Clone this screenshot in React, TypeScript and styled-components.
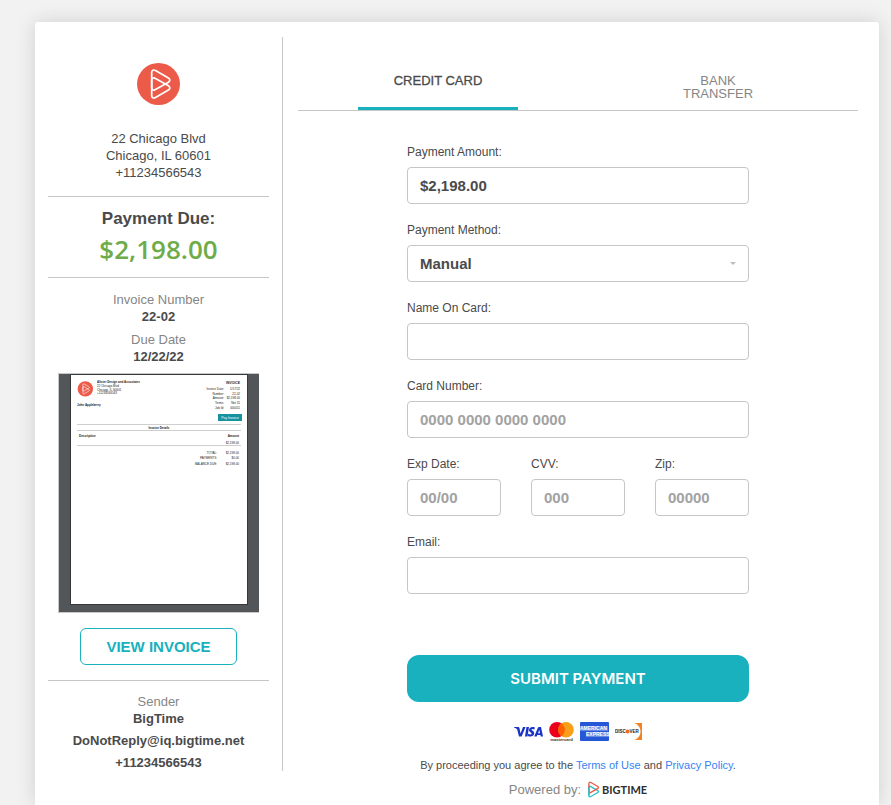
import React, { useState } from "react";
import styled, { createGlobalStyle } from "styled-components";

const teal = "#18b1bd";
const ink = "#4a4a4a";
const muted = "#868686";
const line = "#c6c6c6";
const coral = "#ec5b49";

const GlobalStyle = createGlobalStyle`
  *, *::before, *::after { box-sizing: border-box; }
  body {
    margin: 0;
    background: #f2f2f2;
    color: ${ink};
    font-family: "Liberation Sans", Arial, sans-serif;
    font-size: 13px;
    line-height: 17px;
  }
  button, input, select { font-family: inherit; }
`;

const Page = styled.div`
  display: flex;
  min-height: 100vh;
  padding: 22px 12px 0 35px;
`;

const Card = styled.div`
  flex: 1;
  display: flex;
  align-items: flex-start;
  padding-top: 15px;
  background: #fff;
  border-radius: 3px 3px 0 0;
  box-shadow: 0 0 20px rgba(0, 0, 0, 0.14);
`;

const Sidebar = styled.aside`
  flex: 0 0 248px;
  padding: 26px 13px 0;
  border-right: 1px solid ${line};
  text-align: center;
`;

const Section = styled.section<{ $top: number; $bottom: number }>`
  display: flex;
  flex-direction: column;
  align-items: center;
  padding: ${(p) => p.$top}px 0 ${(p) => p.$bottom}px;
  & + & { border-top: 1px solid ${line}; }
`;

const Address = styled.address`
  margin-top: 25px;
  font-style: normal;
`;

const DueTitle = styled.h2`
  margin: 0;
  font-size: 17px;
  line-height: 20px;
`;

const DueAmount = styled.div`
  margin-top: 3px;
  color: #6fac49;
  font-family: "Open Sans", "Noto Sans", sans-serif;
  font-size: 26px;
  font-weight: 600;
  line-height: 34px;
`;

const Facts = styled.dl<{ $gap: number }>`
  display: flex;
  flex-direction: column;
  gap: ${(p) => p.$gap}px;
  margin: 0;
`;

const Term = styled.dt`
  color: ${muted};
`;

const Value = styled.dd`
  margin: 0;
  font-weight: 700;
`;

const Thumbnail = styled.svg`
  display: block;
  margin-top: 8px;
  font-family: "Liberation Sans", Arial, sans-serif;
`;

const ViewButton = styled.button`
  width: 157px;
  height: 37px;
  margin-top: 14px;
  border: 1px solid ${teal};
  border-radius: 6px;
  background: #fff;
  color: ${teal};
  font-size: 15px;
  font-weight: 700;
  cursor: pointer;
`;

const Main = styled.main`
  flex: 1;
  min-width: 0;
  padding: 15px 21px 0 15px;
`;

const Tabs = styled.div`
  display: grid;
  grid-template-columns: 1fr 1fr;
  justify-items: center;
  border-bottom: 1px solid ${line};
`;

const Tab = styled.button<{ $active: boolean }>`
  display: flex;
  justify-content: center;
  align-items: flex-start;
  width: 160px;
  height: 58px;
  padding: 22px 32px 0;
  border: 0;
  background: ${(p) =>
    p.$active ? `linear-gradient(${teal}, ${teal}) bottom / 100% 3px no-repeat` : "none"};
  border-radius: 2px 2px 0 0;
  color: ${(p) => (p.$active ? ink : muted)};
  font-size: 13px;
  line-height: 13px;
  -webkit-text-stroke: ${(p) => (p.$active ? "0.3px" : "0")};
  cursor: pointer;
`;

const Form = styled.form`
  display: flex;
  flex-direction: column;
  gap: 19px;
  max-width: 342px;
  margin: 34px auto 0;
`;

const FieldBox = styled.div`
  display: flex;
  flex-direction: column;
  gap: 8px;
  min-width: 0;
`;

const Label = styled.label`
  font-size: 12px;
  line-height: 14px;
`;

const Input = styled.input`
  width: 100%;
  height: 37px;
  padding: 0 12px;
  border: 1px solid ${line};
  border-radius: 4px;
  background: #fff;
  color: ${ink};
  font-size: 15px;
  font-weight: 700;
  &::placeholder { color: #a2a2a2; opacity: 1; }
`;

const SelectWrap = styled.div`
  display: grid;
  align-items: center;
  & > * { grid-area: 1 / 1; }
  & > svg {
    justify-self: end;
    margin-right: 13px;
    pointer-events: none;
  }
`;

const Select = styled(Input).attrs({ as: "select" })`
  appearance: none;
`;

const Columns = styled.div`
  display: grid;
  grid-template-columns: repeat(3, 1fr);
  gap: 30px;
`;

const Submit = styled.button`
  height: 47px;
  margin-top: 42px;
  border: 0;
  border-radius: 12px;
  background: ${teal};
  color: #fff;
  font-family: Inter, sans-serif;
  font-size: 15px;
  font-weight: 600;
  cursor: pointer;
`;

const Footer = styled.footer`
  display: flex;
  flex-direction: column;
  align-items: center;
  padding-top: 20px;
`;

const Brands = styled.div`
  display: flex;
  gap: 6px;
`;

const Terms = styled.p`
  margin: 16px 0 0;
  font-size: 11px;
  line-height: 14px;
`;

const TermsLink = styled.a`
  color: #3583f5;
  text-decoration: none;
`;

const Powered = styled.div`
  display: flex;
  align-items: center;
  gap: 7px;
  margin-top: 9px;
  color: ${muted};
`;

const Wordmark = styled.span`
  display: flex;
  align-items: center;
  gap: 3px;
  color: #2d2d2d;
  font-family: Lato, sans-serif;
  font-size: 11px;
  font-weight: 700;
`;

const upper =
  "M14.7 9.5C14.7 7 16.5 6.4 18.5 7.6L31 14.8C33.5 16.2 33.5 18 31 19.5L18.5 26.6C16.5 27.8 14.7 27 14.7 24.5Z";
const lower =
  "M14.7 32.5C14.7 35 16.5 35.6 18.5 34.4L31 27.2C33.5 25.8 33.5 24 31 22.5L18.5 15.4C16.5 14.2 14.7 15 14.7 17.5Z";

const Emblem = () => (
  <>
    <ellipse cx="21.5" cy="21" rx="21.5" ry="21" fill={coral} />
    <path d={upper} fill="none" stroke="#fff" strokeWidth="1.7" />
    <path d={lower} fill="none" stroke="#fff" strokeWidth="1.7" />
  </>
);

const meta: [string, string, number][] = [
  ["Invoice Date:", "5/17/22", 17],
  ["Number:", "22-02", 22],
  ["Amount:", "$2,198.00", 26],
  ["Terms:", "Net 15", 31],
  ["Job Id:", "000011", 36],
];
const totals: [string, string, number][] = [
  ["TOTAL:", "$2,198.00", 81],
  ["PAYMENTS:", "$0.00", 86],
  ["BALANCE DUE:", "$2,198.00", 92],
];

const InvoicePreview = () => (
  <Thumbnail width="201" height="241" viewBox="0 0 201 241" role="img" aria-label="Invoice preview">
    <rect width="201" height="240" fill="#c8c8c8" />
    <rect x="1" y="1" width="200" height="238" fill="#525659" />
    <rect x="12" y="1" width="178" height="231" fill="#35393c" />
    <rect x="13" y="2" width="176" height="229" fill="#fff" />
    <g transform="translate(19.6 8.3) scale(.36)"><Emblem /></g>
    <g fill="#222" fontSize="3">
      <text x="39" y="10" fontWeight="700">Alister Design and Associates</text>
      <text x="39" y="14">22 Chicago Blvd</text>
      <text x="39" y="17.5">Chicago, IL 60601</text>
      <text x="39" y="21">+11234566543</text>
      <text x="19" y="33" fontWeight="700">John Appleberry</text>
      <text x="182" y="11" textAnchor="end" fontWeight="700" fontSize="3.4">INVOICE</text>
      {meta.map(([k, v, y]) => (
        <g key={k} textAnchor="end">
          <text x="166" y={y}>{k}</text>
          <text x="182" y={y}>{v}</text>
        </g>
      ))}
      <text x="101" y="55.5" textAnchor="middle" fontWeight="700">Invoice Details</text>
      <text x="21" y="64" fontWeight="700">Description</text>
      <text x="181" y="64" textAnchor="end" fontWeight="700">Amount</text>
      <text x="181" y="70.5" textAnchor="end">$2,198.00</text>
      {totals.map(([k, v, y]) => (
        <g key={k} textAnchor="end">
          <text x="159" y={y}>{k}</text>
          <text x="181" y={y}>{v}</text>
        </g>
      ))}
    </g>
    <rect x="160" y="41" width="24" height="7" fill="#1592a0" />
    <text x="172" y="45.7" textAnchor="middle" fontSize="3.4" fill="#fff">Pay Invoice</text>
    <g fill="#cfcfcf">
      <rect x="19" y="51" width="164" height="1" />
      <rect x="19" y="57" width="164" height="1" />
      <rect x="19" y="72" width="164" height="1" />
    </g>
  </Thumbnail>
);

const Visa = () => (
  <svg width="29" height="20" viewBox="0 0 29 20" role="img" aria-label="Visa">
    <g fill="#1a34c8">
      <path d="M0 5H4.2Q5.2 5.100 5.5 6.200L6.5 11.400 9 5H11.6L7.6 14.400H5L3.100 7.200Q2 6.100 0 5.400Z" />
      <path d="M12.500 5H15L13.500 14.400H11Z" />
      <path d="M20.800 5.400L20.400 7.400Q17.800 6.300 17.500 7.600C17.500 8.600 20.200 8.800 20.200 11.200 20 14.600 16.400 15 13.800 13.900L14.200 11.800Q17.100 13.300 17.600 11.600C17.600 10.400 15 10.300 15 8 15.200 5 18.400 4.300 20.800 5.400Z" />
      <path fillRule="evenodd" d="M25 5H27L29 14.400H26.700L26.400 13H23.300L22.700 14.400H20.200L23.900 5.800Q24.200 5 25 5ZM25.300 7.700L24 11.200H26Z" />
    </g>
  </svg>
);

const Mastercard = () => (
  <svg width="25" height="20" viewBox="0 0 25 20" role="img" aria-label="Mastercard">
    <circle cx="8" cy="7.8" r="7.8" fill="#eb001b" />
    <circle cx="17" cy="7.8" r="7.8" fill="#f79e1b" />
    <path d="M12.5 1.4a7.8 7.8 0 0 1 0 12.8a7.8 7.8 0 0 1 0-12.8Z" fill="#ff5f00" />
    <text x="12.5" y="19" textAnchor="middle" fontSize="4.2" fontWeight="700" fill="#333">mastercard</text>
  </svg>
);

const Amex = () => (
  <svg width="29" height="20" viewBox="0 0 29 20" role="img" aria-label="American Express">
    <rect width="29" height="19" rx="1" fill="#2557d6" />
    <rect y="4" width="28" height="5" fill="#fff" opacity=".3" />
    <rect x="6" y="10" width="23" height="5" fill="#fff" opacity=".3" />
    <g fontSize="5" fontWeight="700" fill="#fff">
      <text x="0" y="8.4">AMERICAN</text>
      <text x="6" y="14.4">EXPRESS</text>
    </g>
  </svg>
);

const Discover = () => (
  <svg width="27" height="20" viewBox="0 0 27 20" role="img" aria-label="Discover">
    <path d="M19 1H27V18H19C22.500 17 25.500 14 25.500 9.500S22.500 2 19 1Z" fill="#f58220" />
    <g fontSize="4.5" fontWeight="700" fill="#222">
      <text x="0" y="11.200">DISC</text>
      <text x="14.500" y="11.200">VER</text>
    </g>
    <circle cx="12.600" cy="9.600" r="2" fill="#f26a21" />
  </svg>
);

const BigTimeMark = () => (
  <svg width="11" height="17" viewBox="13 5 21 32" aria-hidden="true">
    <path d={lower} fill="none" stroke="#2cc0cb" strokeWidth="2.6" />
    <path d={upper} fill="none" stroke={coral} strokeWidth="2.6" />
    <path d="M14.700 17V33" stroke="#2cc0cb" strokeWidth="2.6" />
  </svg>
);

type FieldProps = { id: string; label: string; placeholder?: string; defaultValue?: string; type?: string };

const Field = ({ id, label, ...rest }: FieldProps) => (
  <FieldBox>
    <Label htmlFor={id}>{label}</Label>
    <Input id={id} {...rest} />
  </FieldBox>
);

export default function App() {
  const [tab, setTab] = useState("card");
  return (
    <>
      <GlobalStyle />
      <Page>
        <Card>
          <Sidebar>
            <Section $top={0} $bottom={15}>
              <svg width="43" height="42" viewBox="0 0 43 42" aria-hidden="true"><Emblem /></svg>
              <Address>
                22 Chicago Blvd<br />Chicago, IL 60601<br />+11234566543
              </Address>
            </Section>
            <Section $top={12} $bottom={11}>
              <DueTitle>Payment Due:</DueTitle>
              <DueAmount>$2,198.00</DueAmount>
            </Section>
            <Section $top={13} $bottom={15}>
              <Facts $gap={6}>
                <div><Term>Invoice Number</Term><Value>22-02</Value></div>
                <div><Term>Due Date</Term><Value>12/22/22</Value></div>
              </Facts>
              <InvoicePreview />
              <ViewButton type="button">VIEW INVOICE</ViewButton>
            </Section>
            <Section $top={12} $bottom={0}>
              <Facts $gap={5}>
                <div><Term>Sender</Term><Value>BigTime</Value></div>
                <Value>DoNotReply@iq.bigtime.net</Value>
                <Value>+11234566543</Value>
              </Facts>
            </Section>
          </Sidebar>
          <Main>
            <Tabs role="tablist">
              <Tab type="button" role="tab" aria-selected={tab === "card"} $active={tab === "card"} onClick={() => setTab("card")}>
                CREDIT CARD
              </Tab>
              <Tab type="button" role="tab" aria-selected={tab === "bank"} $active={tab === "bank"} onClick={() => setTab("bank")}>
                BANK TRANSFER
              </Tab>
            </Tabs>
            <Form onSubmit={(e: React.FormEvent) => e.preventDefault()}>
              <Field id="amount" label="Payment Amount:" defaultValue="$2,198.00" />
              <FieldBox>
                <Label htmlFor="method">Payment Method:</Label>
                <SelectWrap>
                  <Select id="method"><option>Manual</option></Select>
                  <svg width="6" height="3" viewBox="0 0 6 3" aria-hidden="true">
                    <path d="M0 0H6L3 3Z" fill="#bdbdbd" />
                  </svg>
                </SelectWrap>
              </FieldBox>
              <Field id="name" label="Name On Card:" />
              <Field id="number" label="Card Number:" placeholder="0000 0000 0000 0000" />
              <Columns>
                <Field id="exp" label="Exp Date:" placeholder="00/00" />
                <Field id="cvv" label="CVV:" placeholder="000" />
                <Field id="zip" label="Zip:" placeholder="00000" />
              </Columns>
              <Field id="email" label="Email:" type="email" />
              <Submit type="submit">SUBMIT PAYMENT</Submit>
            </Form>
            <Footer>
              <Brands><Visa /><Mastercard /><Amex /><Discover /></Brands>
              <Terms>
                By proceeding you agree to the <TermsLink href="#terms">Terms of Use</TermsLink> and{" "}
                <TermsLink href="#privacy">Privacy Policy</TermsLink>.
              </Terms>
              <Powered>
                Powered by:
                <Wordmark><BigTimeMark />BIGTIME</Wordmark>
              </Powered>
            </Footer>
          </Main>
        </Card>
      </Page>
    </>
  );
}
